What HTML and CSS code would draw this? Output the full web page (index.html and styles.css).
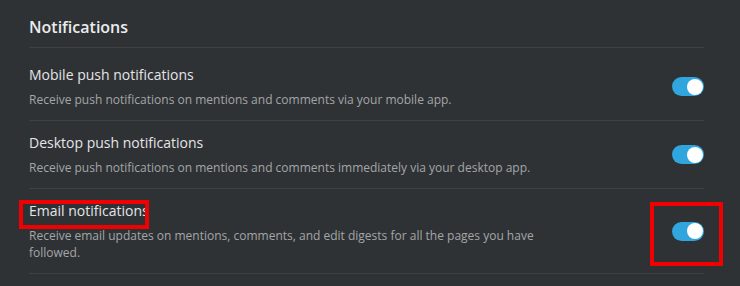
FILE: index.html
```html
<!DOCTYPE html>
<html>

<head>
  <meta name="viewport" content="width=device-width, initial-scale=1.0">
  <link rel="stylesheet" href="styles.css">
</head>

<body>
  <div class="settings">
    <h2 class="section-title">Notifications</h2>

    <div class="setting first">
      <div class="text">
        <div class="label">Mobile push notifications</div>
        <div class="desc">Receive push notifications on mentions and comments via your mobile app.</div>
      </div>
      <label class="toggle on"><span class="knob"></span></label>
    </div>

    <div class="setting">
      <div class="text">
        <div class="label">Desktop push notifications</div>
        <div class="desc">Receive push notifications on mentions and comments immediately via your desktop app.</div>
      </div>
      <label class="toggle on"><span class="knob"></span></label>
    </div>

    <div class="setting">
      <div class="text">
        <div class="label">Email notifications</div>
        <div class="desc">Receive email updates on mentions, comments, and edit digests for all the pages you have followed.</div>
      </div>
      <label class="toggle on"><span class="knob"></span></label>
    </div>
  </div>

  <!-- highlight boxes drawn over the screenshot -->
  <div class="mark mark-label"></div>
  <div class="mark mark-toggle"></div>
</body>

</html>
```

FILE: styles.css
```css
body {
  margin: 0;
  background-color: #2f3235;
  font-family: 'Open Sans', 'Noto Sans', sans-serif;
  color: #e3e4e5;
  height: 286px;
  overflow: hidden;
  position: relative;
}

.settings {
  width: 675px;
  margin-left: 29px;
}

.section-title {
  margin: 0;
  height: 48px;
  box-sizing: border-box;
  padding-top: 16px;
  font-size: 16px;
  line-height: 22px;
  font-weight: 600;
  color: #ebeced;
  border-bottom: 1px solid #3d4144;
}

.setting {
  display: flex;
  align-items: center;
  justify-content: space-between;
  padding: 12px 0;
  border-bottom: 1px solid #3d4144;
}

.setting.first {
  padding-top: 17px;
}

.text {
  max-width: 525px;
}

.label {
  font-size: 14px;
  line-height: 20px;
  color: #e4e5e6;
}

.desc {
  margin-top: 6px;
  font-size: 12px;
  line-height: 17px;
  color: #a3a6a8;
}

.toggle {
  display: flex;
  align-items: center;
  width: 32px;
  height: 19px;
  border-radius: 10px;
  background-color: #31a5dd;
  flex-shrink: 0;
  padding: 0 1px;
  box-sizing: border-box;
  justify-content: flex-end;
}

.knob {
  width: 16px;
  height: 16px;
  border-radius: 50%;
  background-color: #fff;
}

.mark {
  position: absolute;
  border: 4px solid #f00000;
  box-sizing: border-box;
}

.mark-label {
  left: 19px;
  top: 200px;
  width: 130px;
  height: 29px;
}

.mark-toggle {
  left: 650px;
  top: 202px;
  width: 73px;
  height: 64px;
}
```
